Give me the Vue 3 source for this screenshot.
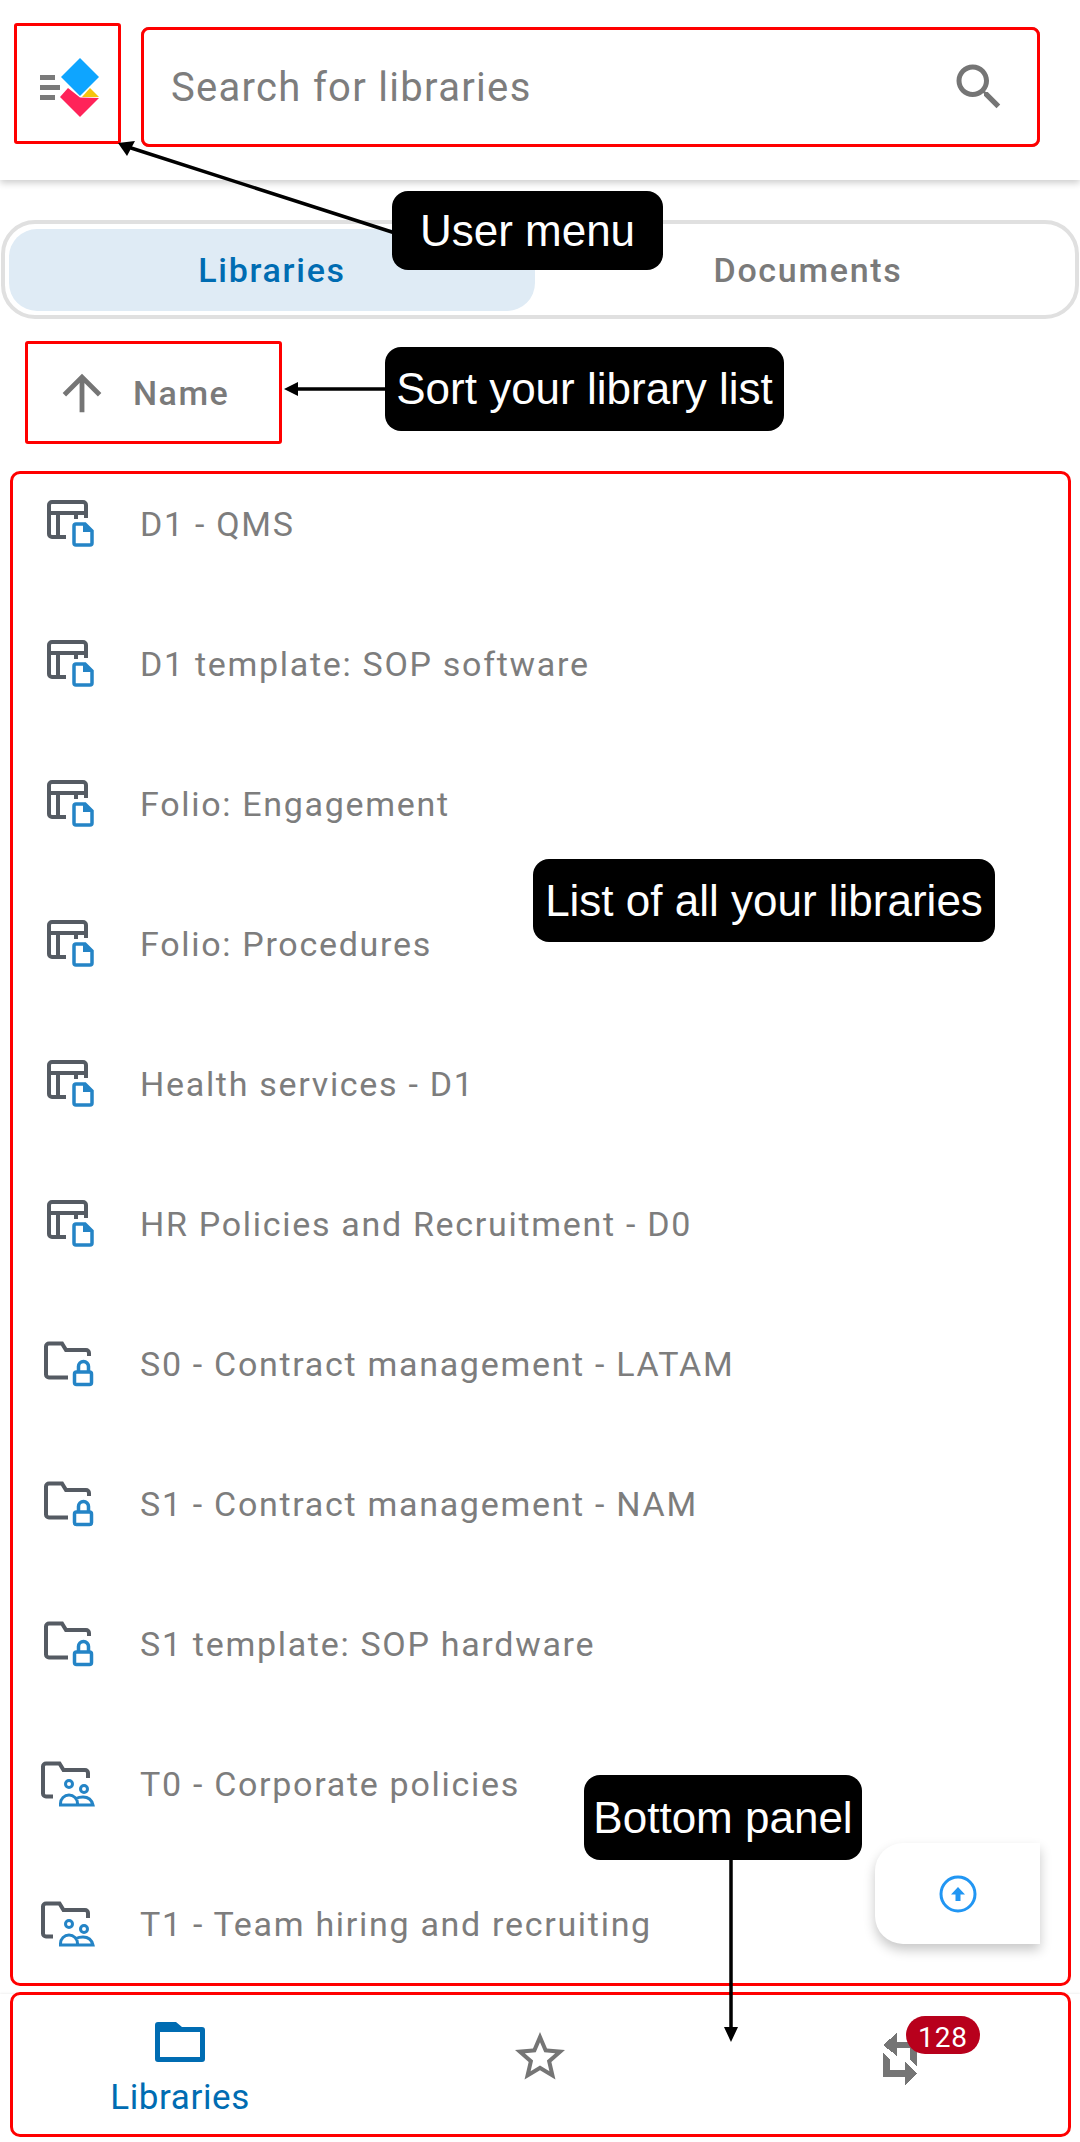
<template>
  <div class="page">
    <header class="topbar">
      <button class="logo-btn">
        <svg class="logo" width="64" height="64" viewBox="0 0 64 64">
          <rect x="2" y="17" width="15" height="5" fill="#7a7a7a" />
          <rect x="2" y="27" width="20" height="5" fill="#7a7a7a" />
          <rect x="2" y="37" width="15" height="5" fill="#7a7a7a" />
          <polygon points="42,0 61,19 42,38 23,19" fill="#0ea5ff" />
          <polygon points="52,30 61,39 44,39" fill="#f6c40d" />
          <polygon points="22,39 30,30 42,39.5 61,40 42,59" fill="#ff2359" />
        </svg>
      </button>
      <div class="search">
        <span class="search-text">Search for libraries</span>
        <svg width="60" height="60" viewBox="0 0 24 24">
          <path fill="#757575" d="M15.5 14h-.79l-.28-.27C15.41 12.59 16 11.11 16 9.5 16 5.91 13.09 3 9.5 3S3 5.91 3 9.5 5.91 16 9.5 16c1.61 0 3.09-.59 4.23-1.57l.27.28v.79l5 4.99L20.49 19l-4.99-5zm-6 0C7.01 14 5 11.99 5 9.5S7.01 5 9.5 5 14 7.01 14 9.5 11.99 14 9.5 14z" />
        </svg>
      </div>
    </header>

    <div class="tabs">
      <div class="tab active">Libraries</div>
      <div class="tab other">Documents</div>
    </div>

    <div class="sort">
      <svg width="58" height="58" viewBox="0 0 24 24">
        <path fill="#757575" d="M4 12l1.41 1.41L11 7.83V20h2V7.83l5.58 5.59L20 12l-8-8-8 8z" />
      </svg>
      <span class="sort-label">Name</span>
    </div>

    <main class="list">
      <div v-for="item in libraries" :key="item.name" class="row">
        <svg class="row-icon" width="60" height="60" viewBox="0 0 60 60" fill="none">
          <template v-if="item.kind === 'site'">
            <path d="M27 43H13a3 3 0 0 1-3-3V11a3 3 0 0 1 3-3h31a3 3 0 0 1 3 3v13M10 19h37M19 19v24M37 19v6" stroke="#555b63" stroke-width="4" />
            <path d="M37 30h9l7 7v12a2 2 0 0 1-2 2H37a2 2 0 0 1-2-2V32a2 2 0 0 1 2-2z" stroke="#2484c6" stroke-width="3.5" fill="#fff" />
            <path d="M44 30l9 8h-9z" fill="#2484c6" />
          </template>
          <template v-else-if="item.kind === 'private'">
            <path d="M29 43.5H10a3 3 0 0 1-3-3V12.5a3 3 0 0 1 3-3h13l4 6.500h20a3 3 0 0 1 3 3V22" stroke="#555b63" stroke-width="4" />
            <rect x="35.500" y="38" width="17" height="12.500" rx="2" stroke="#2484c6" stroke-width="3.500" fill="#fff" />
            <path d="M39.500 38v-5.500a5 5 0 0 1 10 0V38" stroke="#2484c6" stroke-width="3.500" />
          </template>
          <template v-else>
            <path d="M14 42.500H7a3 3 0 0 1-3-3V12.500a3 3 0 0 1 3-3h13.500l4 6.500H46a3 3 0 0 1 3 3V24" stroke="#555b63" stroke-width="4" />
            <circle cx="30" cy="30" r="3.500" stroke="#2484c6" stroke-width="3" />
            <circle cx="45" cy="35" r="3.500" stroke="#2484c6" stroke-width="3" />
            <path d="M21.500 51v-1.500a8.500 8.500 0 0 1 17 0V51zM37 44.500q3-1.500 7-1.500 8 0 10 8H38.500" stroke="#2484c6" stroke-width="3" fill="#fff" />
          </template>
        </svg>
        <span class="row-name">{{ item.name }}</span>
      </div>
      <button class="upload">
        <svg width="40" height="40" viewBox="0 0 40 40" fill="none">
          <circle cx="20" cy="20" r="17" stroke="#2196f3" stroke-width="3" />
          <path d="M20 13l7 7.500h-4.500V27h-5v-6.500H13z" fill="#2196f3" />
        </svg>
      </button>
    </main>

    <nav class="bottom">
      <div class="nav-item selected">
        <svg width="50" height="40" viewBox="0 0 50 40">
          <path fill="#006cb2" fill-rule="evenodd" d="M3 0h18l6 5h20a3 3 0 0 1 3 3v29a3 3 0 0 1-3 3H3a3 3 0 0 1-3-3V3a3 3 0 0 1 3-3zM5 10v25h40V10z" />
        </svg>
        <span class="nav-label">Libraries</span>
      </div>
      <div class="nav-item">
        <svg width="60" height="60" viewBox="0 0 24 24">
          <path fill="#757575" d="M22 9.240l-7.190-.620L12 2 9.190 8.630 2 9.240l5.460 4.730L5.820 21 12 17.270 18.180 21l-1.630-7.030L22 9.240zM12 15.400l-3.760 2.270 1-4.280-3.320-2.880 4.380-.380L12 6.100l1.710 4.040 4.380.380-3.320 2.880 1 4.280L12 15.400z" />
        </svg>
      </div>
      <div class="nav-item">
        <div class="sync">
          <svg width="34" height="52" viewBox="0 0 34 52" shape-rendering="crispEdges">
            <path fill="#757575" d="M0 12L14 0v9h20v25l-7-7V15H14v8zM0 20l7 6v11h15v-8l12 12-12 11v-8H0z" />
          </svg>
          <span class="badge">128</span>
        </div>
      </div>
    </nav>

    <div class="mark mark-logo"></div>
    <div class="mark mark-search"></div>
    <div class="mark mark-sort"></div>
    <div class="mark mark-list"></div>
    <div class="mark mark-bottom"></div>

    <svg class="arrows" width="1080" height="2142" viewBox="0 0 1080 2142">
      <path d="M395 233L128 147M385 389H295M731 1858V2027" stroke="#000" stroke-width="3.5" fill="none" />
      <polygon points="118,143 135,141 127,156" fill="#000" />
      <polygon points="284,389 298,382 298,396" fill="#000" />
      <polygon points="731,2042 724,2027 738,2027" fill="#000" />
    </svg>

    <div class="note note-user">User menu</div>
    <div class="note note-sort">Sort your library list</div>
    <div class="note note-list">List of all your libraries</div>
    <div class="note note-bottom">Bottom panel</div>
  </div>
</template>

<script setup>
const libraries = [
  { name: 'D1 - QMS', kind: 'site' },
  { name: 'D1 template: SOP software', kind: 'site' },
  { name: 'Folio: Engagement', kind: 'site' },
  { name: 'Folio: Procedures', kind: 'site' },
  { name: 'Health services - D1', kind: 'site' },
  { name: 'HR Policies and Recruitment - D0', kind: 'site' },
  { name: 'S0 - Contract management - LATAM', kind: 'private' },
  { name: 'S1 - Contract management - NAM', kind: 'private' },
  { name: 'S1 template: SOP hardware', kind: 'private' },
  { name: 'T0 - Corporate policies', kind: 'team' },
  { name: 'T1 - Team hiring and recruiting', kind: 'team' }
]
</script>

<style scoped>
.page {
  position: relative;
  width: 1080px;
  height: 2142px;
  overflow: hidden;
  background: #fff;
  font-family: Roboto, sans-serif;
  color: #7a7a7a;
}

.topbar {
  display: flex;
  align-items: center;
  height: 180px;
  padding-bottom: 6px;
  box-sizing: border-box;
  background: #fff;
  box-shadow: 0 3px 7px rgba(0, 0, 0, 0.2);
}

.logo-btn {
  flex: none;
  display: flex;
  width: 141px;
  padding: 0 0 0 38px;
  border: 0;
  background: none;
  box-sizing: border-box;
}

.logo {
  margin-top: 6px;
}

.search {
  display: flex;
  align-items: center;
  justify-content: space-between;
  width: 899px;
  height: 120px;
  padding: 0 30px 0 29px;
  box-sizing: border-box;
  border: 1px solid #777;
  border-radius: 8px;
}

.search-text {
  font-size: 40px;
  letter-spacing: 1.3px;
  color: #7d7d7d;
}

.tabs {
  display: flex;
  height: 99px;
  margin: 40px 1px 0;
  padding: 5px 4px 4px;
  box-sizing: border-box;
  border: 4px solid #e0e0e0;
  border-radius: 34px;
}

.tab {
  display: flex;
  align-items: center;
  justify-content: center;
  font-size: 34px;
  font-weight: 500;
  letter-spacing: 1.7px;
  border-radius: 28px;
}

.tab.active {
  flex: 0 0 526px;
  background: #dfebf5;
  color: #006cb2;
}

.tab.other {
  flex: 1;
  padding-left: 10px;
}

.sort {
  display: flex;
  align-items: center;
  gap: 22px;
  height: 135px;
  padding: 13px 0 0 53px;
  box-sizing: border-box;
}

.sort-label {
  font-size: 34px;
  font-weight: 500;
  letter-spacing: 1.5px;
}

.list {
  position: relative;
  height: 1540px;
}

.row {
  display: flex;
  align-items: center;
  height: 140px;
  padding-left: 39px;
  box-sizing: border-box;
}

.row-name {
  margin-left: 41px;
  font-size: 34px;
  letter-spacing: 1.7px;
  color: #7d7d7d;
}

.upload {
  position: absolute;
  top: 1389px;
  left: 875px;
  display: flex;
  align-items: center;
  justify-content: center;
  width: 165px;
  height: 101px;
  padding: 0;
  border: 0;
  border-radius: 28px 0 0 28px;
  background: #fff;
  box-shadow: 0 6px 12px rgba(0, 0, 0, 0.22);
}

.bottom {
  display: grid;
  grid-template-columns: repeat(3, 360px);
  height: 148px;
  box-shadow: 0 -1px 2px rgba(0, 0, 0, 0.06);
  background: #fff;
}

.nav-item {
  display: flex;
  flex-direction: column;
  align-items: center;
  padding-top: 33px;
  box-sizing: border-box;
}

.nav-item.selected {
  padding-top: 28px;
  gap: 16px;
}

.nav-label {
  font-size: 35px;
  line-height: 40px;
  letter-spacing: 0.6px;
  color: #006cb2;
}

.sync {
  position: relative;
  display: flex;
  margin-top: 6px;
}

.badge {
  position: absolute;
  top: -17px;
  left: 23px;
  width: 74px;
  height: 38px;
  border-radius: 19px;
  background: #b8001c;
  color: #fff;
  font-size: 28px;
  line-height: 43px;
  letter-spacing: 1px;
  text-align: center;
}

.mark {
  position: absolute;
  box-sizing: border-box;
  border: 3px solid #f00;
  border-radius: 3px;
}

.mark-logo { left: 14px; top: 23px; width: 107px; height: 121px; }
.mark-search { left: 141px; top: 27px; width: 899px; height: 120px; border-radius: 8px; }
.mark-sort { left: 25px; top: 341px; width: 257px; height: 103px; }
.mark-list { left: 10px; top: 471px; width: 1061px; height: 1515px; border-radius: 10px; }
.mark-bottom { left: 10px; top: 1992px; width: 1061px; height: 145px; border-radius: 10px; }

.arrows {
  position: absolute;
  top: 0;
  left: 0;
}

.note {
  position: absolute;
  display: flex;
  align-items: center;
  justify-content: center;
  box-sizing: border-box;
  background: #000;
  border-radius: 16px;
  color: #fff;
  font-family: "Liberation Sans", Arial, sans-serif;
  font-size: 44px;
  white-space: nowrap;
}

.note-user { left: 392px; top: 191px; width: 271px; height: 79px; }
.note-sort { left: 385px; top: 347px; width: 399px; height: 84px; }
.note-list { left: 533px; top: 859px; width: 462px; height: 83px; }
.note-bottom { left: 584px; top: 1775px; width: 278px; height: 85px; }
</style>
